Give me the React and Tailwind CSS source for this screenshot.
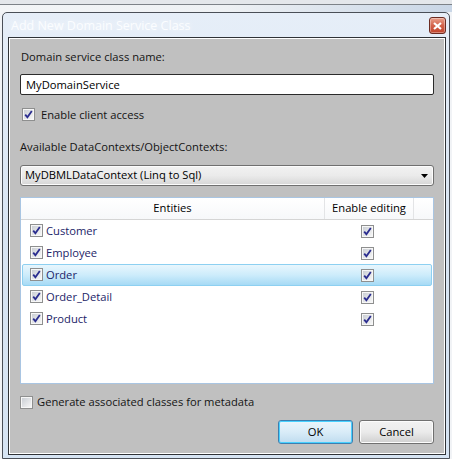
import { useState } from 'react';

function Check({ checked }) {
  return (
    <span className="inline-flex w-[13px] h-[13px] shrink-0 items-center justify-center border border-[#8e8f8f] bg-[#f4f4f4] shadow-[inset_0_0_0_1px_#f7f7f7]">
      <span className="flex w-[9px] h-[9px] items-center justify-center bg-gradient-to-br from-[#cbcfd5] to-[#f6f6f6]">
        {checked && (
          <svg width="9" height="9" viewBox="0 0 9 9">
            <path d="M1.2 4.6 L3.4 7.2 L7.8 0.9" fill="none" stroke="#2b2d8f" strokeWidth="1.8" />
          </svg>
        )}
      </span>
    </span>
  );
}

const entities = ['Customer', 'Employee', 'Order', 'Order_Detail', 'Product'];

export default function App() {
  const [name, setName] = useState('MyDomainService');
  const selected = 'Order';

  return (
    <div className="w-[452px] h-[459px] overflow-hidden bg-[#f1f3f6] font-['Segoe_UI','Open_Sans',sans-serif] text-[11.2px]">
      {/* desktop strip behind the dialog */}
      <div className="h-[12px] flex flex-col">
        <div className="h-[4px] bg-[#e4e7eb]" />
        <div className="h-[1px] bg-[#7d8288]" />
        <div className="flex-1 bg-gradient-to-r from-[#f3f5f7] via-[#eef1f4] to-[#c9d6e6]" />
      </div>

      {/* window frame */}
      <div className="ml-[2px] w-[448px] h-[447px] border border-[#4a4f57] rounded-t-[5px] bg-gradient-to-b from-[#e6eef8] via-[#d9e5f3] to-[#d6e4f3] flex flex-col pl-[5px] pr-[3px] pb-[3px]">
        {/* title bar */}
        <div className="h-[24px] flex justify-between shrink-0">
          <span className="pl-[3px] pt-[4px] text-[12.5px] text-[#fbfdff] [text-shadow:0_0_6px_rgba(255,255,255,0.9)]">
            Add New Domain Service Class
          </span>
          <button className="mt-[4px] w-[17px] h-[17px] rounded-[3px] border border-[#6b2b22] bg-gradient-to-b from-[#e9a08c] via-[#d3624a] to-[#c0432b] shadow-[inset_0_0_0_1px_rgba(255,255,255,0.35)] flex items-center justify-center">
            <svg width="9" height="8" viewBox="0 0 9 8">
              <path d="M1 1 L8 7 M8 1 L1 7" stroke="#fff" strokeWidth="2.2" />
            </svg>
          </button>
        </div>

        {/* client area */}
        <div className="flex-1 border border-[#2f3236] bg-[#c0c0c0] shadow-[inset_1px_1px_0_#ffffff,inset_-1px_-1px_0_#ffffff] flex flex-col px-[11px] pt-[11px] text-[#141414]">
          <label className="ml-[1px] leading-[16px]">Domain service class name:</label>
          <input
            value={name}
            onChange={(e) => setName(e.target.value)}
            className="mt-[9px] h-[21px] w-full border border-[#2b2b2b] rounded-[2px] bg-white px-[5px] text-[11.2px] text-black outline-none"
          />

          <label className="mt-[13px] ml-[2px] flex items-center gap-[6px] h-[13px] leading-[16px]">
            <Check checked />
            Enable client access
          </label>

          <label className="mt-[18px] leading-[16px]">Available DataContexts/ObjectContexts:</label>
          <div className="mt-[10px] h-[21px] flex items-center justify-between rounded-[3px] border border-[#707070] bg-gradient-to-b from-[#f2f2f2] via-[#ebebeb] to-[#d6d6d6] px-[4px] text-black shadow-[inset_0_0_0_1px_#fcfcfc]">
            <span>MyDBMLDataContext (Linq to Sql)</span>
            <svg width="7" height="4" viewBox="0 0 7 4" className="mr-[1px]">
              <path d="M0 0 H7 L3.5 4 Z" fill="#000" />
            </svg>
          </div>

          {/* entities list */}
          <div className="mt-[11px] h-[187px] border border-[#a9c5e2] bg-white flex flex-col">
            <div className="h-[22px] flex border-b border-[#d5d5d5] bg-gradient-to-b from-white to-[#f7f8fa] text-black shrink-0">
              <div className="w-[304px] flex items-center justify-center border-r border-[#e3e4e6]">Entities</div>
              <div className="w-[89px] flex items-center justify-center border-r border-[#e3e4e6]">Enable editing</div>
            </div>
            {entities.map((e) => (
              <div
                key={e}
                className={`h-[22px] flex items-center mx-[1px] rounded-[2px] border text-[#1c2468] ${
                  e === selected
                    ? 'border-[#8dd0f1] bg-gradient-to-b from-[#e8f6fd] via-[#cdecfb] to-[#a6daf5]'
                    : 'border-transparent'
                }`}
              >
                <div className="w-[302px] flex items-center gap-[3px] pl-[7px]">
                  <Check checked />
                  <span>{e}</span>
                </div>
                <div className="pl-[36px] flex items-center">
                  <Check checked />
                </div>
              </div>
            ))}
          </div>

          <label className="mt-[12px] flex items-center gap-[4px] h-[13px]">
            <Check checked={false} />
            Generate associated classes for metadata
          </label>

          <div className="mt-[11px] flex justify-end gap-[6px]">
            <button className="w-[75px] h-[24px] rounded-[3px] border border-[#3c7fb1] bg-gradient-to-b from-[#eaf5fc] via-[#d9ecf8] to-[#bfdcef] shadow-[inset_0_0_0_1px_#48d1ff] text-black">
              OK
            </button>
            <button className="w-[75px] h-[24px] rounded-[3px] border border-[#707070] bg-gradient-to-b from-[#f2f2f2] via-[#ebebeb] to-[#cfcfcf] shadow-[inset_0_0_0_1px_#fcfcfc] text-black">
              Cancel
            </button>
          </div>
        </div>
      </div>
    </div>
  );
}
